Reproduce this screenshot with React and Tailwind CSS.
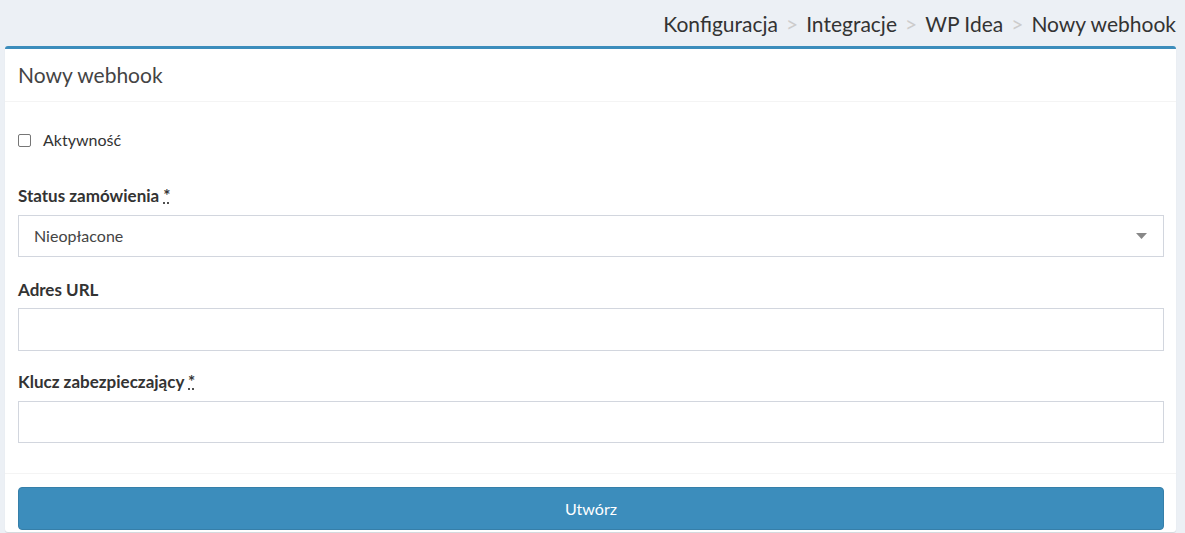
export default function App() {
  return (
    <div className="min-h-[533px] bg-[#ecf0f5] text-[#333] font-['Source_Sans_Pro',Lato,'Liberation_Sans',sans-serif]">
      <div className="h-[46px] flex items-center justify-end pr-[9px] pt-[1px] text-[21px] text-[#333]">
        <span>Konfiguracja</span>
        <span className="text-[#ccc] px-[8px]">&gt;</span>
        <span>Integracje</span>
        <span className="text-[#ccc] px-[8px]">&gt;</span>
        <span>WP Idea</span>
        <span className="text-[#ccc] px-[8px]">&gt;</span>
        <span>Nowy webhook</span>
      </div>
      <div className="ml-[5px] mr-[9px] bg-white border-t-[3px] border-[#3c8dbc] rounded-[3px] shadow-[0_1px_1px_rgba(0,0,0,0.1)]">
        <div className="h-[53px] flex items-center px-[13px] border-b border-[#f4f4f4]">
          <h3 className="text-[21px] text-[#444]">Nowy webhook</h3>
        </div>
        <div className="pl-[13px] pr-[12px] pt-[27px] pb-[30px]">
          <label className="flex items-center gap-[12px] text-[16px] h-[22px]">
            <span className="w-[13px] h-[13px] border border-[#767676] rounded-[2px] bg-white" />
            <span>Aktywność</span>
          </label>
          <div className="mt-[32px]">
            <div className="text-[17px] font-bold h-[24px]">
              Status zamówienia <span className="underline decoration-dotted">*</span>
            </div>
            <div className="mt-[8px] h-[42px] border border-[#d2d6de] flex items-center justify-between px-[15px] text-[16px] text-[#444]">
              <span>Nieopłacone</span>
              <svg width="11" height="6" viewBox="0 0 11 6" className="mr-[1px]">
                <path d="M0 0 H11 L5.5 6 Z" fill="#888" />
              </svg>
            </div>
          </div>
          <div className="mt-[20px]">
            <div className="text-[17px] font-bold h-[24px]">Adres URL</div>
            <div className="mt-[7px] h-[43px] border border-[#d2d6de]" />
          </div>
          <div className="mt-[18px]">
            <div className="text-[17px] font-bold h-[24px]">
              Klucz zabezpieczający <span className="underline decoration-dotted">*</span>
            </div>
            <div className="mt-[8px] h-[42px] border border-[#d2d6de]" />
          </div>
        </div>
        <div className="border-t border-[#f4f4f4] pl-[13px] pr-[12px] pt-[13px] pb-[2px]">
          <button className="w-full h-[43px] rounded-[4px] bg-[#3c8dbc] border border-[#367fa9] text-white text-[16px]">
            Utwórz
          </button>
        </div>
      </div>
    </div>
  )
}
